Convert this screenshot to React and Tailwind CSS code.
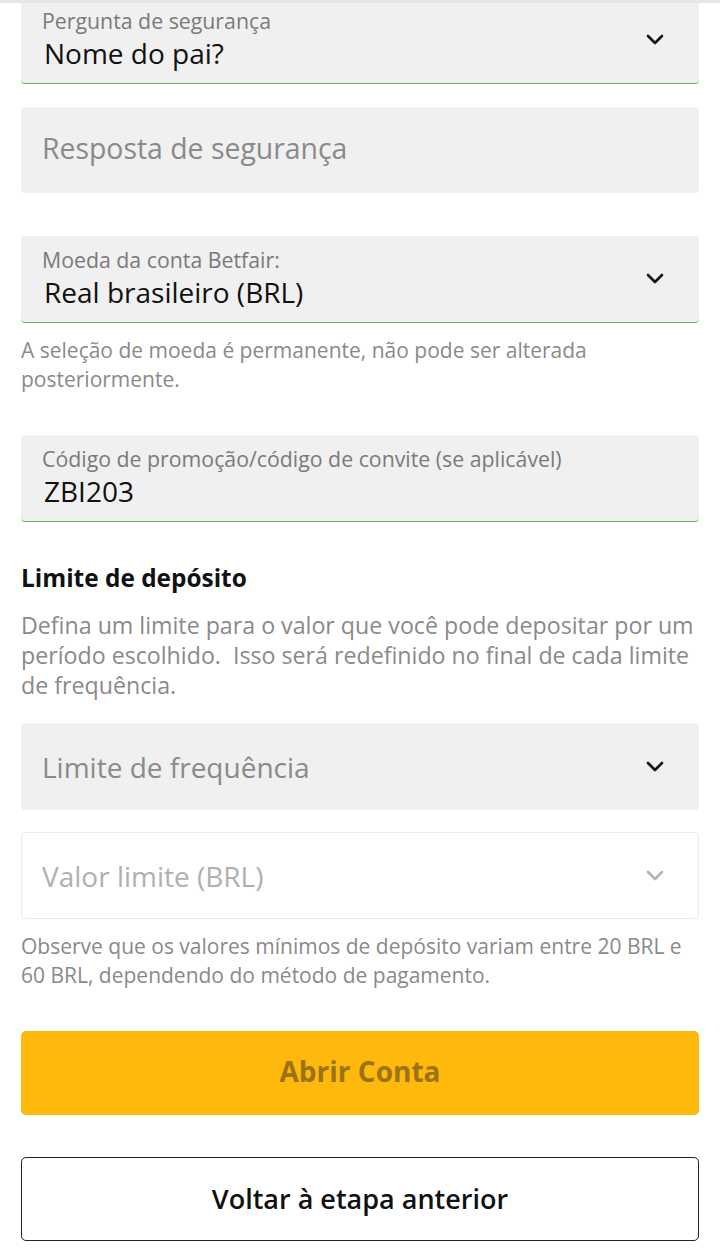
import React from "react";

function Chevron({ light }) {
  return (
    <svg width="20" height="14" viewBox="0 0 20 14" className="shrink-0">
      <path d="M3 3 L10 10 L17 3" fill="none" stroke={light ? "#b5b5b5" : "#111"} strokeWidth="2.6" strokeLinecap="round" strokeLinejoin="round" />
    </svg>
  );
}

function LabeledField({ label, value, chevron, className = "" }) {
  return (
    <div className={`flex items-center bg-[#f0f0f0] border-b border-[#5cb85c] rounded-[4px] pl-[21px] pr-[34px] h-[87px] ${className}`}>
      <div className="flex-1 flex flex-col">
        <span className="text-[21.3px] leading-[26px] text-[#7a7a7a] whitespace-nowrap">{label}</span>
        <span className="text-[28px] leading-[38px] text-[#111] pl-[2px]">{value}</span>
      </div>
      {chevron && <Chevron />}
    </div>
  );
}

export default function App() {
  return (
    <div className="w-[720px] min-h-[1250px] bg-white border-t-[3px] border-[#e6e6e6]" style={{ fontFamily: '"Open Sans", "Noto Sans", sans-serif' }}>
      <div className="px-[21px] flex flex-col">
        <div className="flex items-center bg-[#f0f0f0] border-b border-[#5cb85c] rounded-b-[4px] pl-[21px] pr-[34px] h-[81px]">
          <div className="flex-1 flex flex-col -mt-[7px]">
            <span className="text-[21.3px] leading-[26px] text-[#7a7a7a]">Pergunta de segurança</span>
            <span className="text-[28px] leading-[38px] text-[#111] pl-[2px]">Nome do pai?</span>
          </div>
          <div className="-mt-[6px]"><Chevron /></div>
        </div>

        <div className="mt-[23px] flex items-center bg-[#f0f0f0] rounded-[4px] pl-[21px] pr-[34px] h-[86px]">
          <span className="text-[28.4px] leading-[36px] -mt-[4px] text-[#8a8a8a]">Resposta de segurança</span>
        </div>

        <LabeledField className="mt-[43px]" label="Moeda da conta Betfair:" value="Real brasileiro (BRL)" chevron />
        <p className="mt-[13px] text-[21px] leading-[29px] text-[#8a8a8a]">
          A seleção de moeda é permanente, não pode ser alterada posteriormente.
        </p>

        <LabeledField className="mt-[41px]" label="Código de promoção/código de convite (se aplicável)" value="ZBI203" />

        <h2 className="mt-[41px] text-[24.4px] leading-[30px] font-bold text-[#111]">Limite de depósito</h2>
        <p className="mt-[17px] text-[23.2px] leading-[30px] text-[#8a8a8a]">
          Defina um limite para o valor que você pode depositar por um período escolhido.&nbsp; Isso será redefinido no final de cada limite de frequência.
        </p>

        <div className="mt-[23px] flex items-center bg-[#f0f0f0] rounded-[4px] pl-[21px] pr-[34px] h-[87px]">
          <span className="flex-1 text-[28px] text-[#8a8a8a]">Limite de frequência</span>
          <Chevron />
        </div>

        <div className="mt-[22px] flex items-center bg-white border border-[#ececec] rounded-[4px] pl-[20px] pr-[33px] h-[87px]">
          <span className="flex-1 text-[28px] text-[#b0b0b0]">Valor limite (BRL)</span>
          <Chevron light />
        </div>

        <p className="mt-[13px] text-[21px] leading-[29px] text-[#8a8a8a]">
          Observe que os valores mínimos de depósito variam entre 20 BRL e 60 BRL, dependendo do método de pagamento.
        </p>

        <button className="mt-[41px] h-[84px] rounded-[5px] bg-[#ffb80c] text-[28px] font-bold text-[#9a7414] pb-[4px]">
          Abrir Conta
        </button>

        <button className="mt-[42px] h-[84px] rounded-[5px] bg-white border border-[#222] text-[27px] font-semibold text-[#111]">
          Voltar à etapa anterior
        </button>
      </div>
    </div>
  );
}
